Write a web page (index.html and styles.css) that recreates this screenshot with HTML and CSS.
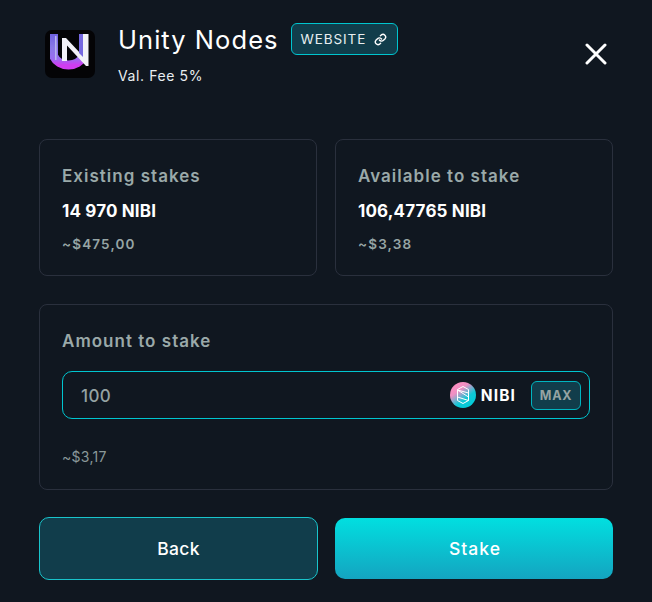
FILE: index.html
```html
<!DOCTYPE html>
<html lang="en">
<head>
<meta charset="utf-8">
<title>Unity Nodes</title>
<link rel="stylesheet" href="styles.css">
</head>
<body>
<main class="modal">
  <header class="header">
    <svg class="logo" width="50" height="48" viewBox="0 0 50 48">
      <defs>
        <linearGradient id="u" x1="0" y1="0" x2="0" y2="1">
          <stop offset="0" stop-color="#6f62e0"/><stop offset=".45" stop-color="#8a78e8"/><stop offset=".8" stop-color="#9a6cf0"/><stop offset="1" stop-color="#d03cf0"/>
        </linearGradient>
        <filter id="soft"><feGaussianBlur stdDeviation=".5"/></filter>
      </defs>
      <rect width="50" height="48" rx="7" fill="#040406"/>
      <g filter="url(#soft)">
        <path d="M8.500 4v22a16.500 15.500 0 0 0 30 0V4" fill="none" stroke="url(#u)" stroke-width="9"/>
        <path d="M10 6h1.500v24H10z" fill="#b8b4ee"/>
        <path d="M17 31V8h4l15 16V4h7.500v32H41L22 15.500V31z" fill="#f2f2f8"/>
        <path d="M34 4h4v23l-4-4z" fill="#7567e0"/>
      </g>
    </svg>
    <div class="title-block">
      <div class="title-row">
        <h1 class="title">Unity Nodes</h1>
        <a class="website">WEBSITE
          <svg class="link-icon" width="13" height="13" viewBox="0 0 24 24" fill="none" stroke="#fff" stroke-width="2.600" stroke-linecap="round" stroke-linejoin="round">
            <path d="M10 13a5 5 0 0 0 7.500.5l3-3a5 5 0 0 0-7-7l-1.700 1.700"/>
            <path d="M14 11a5 5 0 0 0-7.500-.5l-3 3a5 5 0 0 0 7 7l1.700-1.700"/>
          </svg>
        </a>
      </div>
      <p class="fee">Val. Fee 5%</p>
    </div>
    <svg class="close" width="22" height="22" viewBox="0 0 22 22" stroke="#fff" stroke-width="3" stroke-linecap="round">
      <path d="M2 2l18 18M20 2L2 20"/>
    </svg>
  </header>

  <section class="stats">
    <div class="card stat">
      <div class="label">Existing stakes</div>
      <div class="value">14 970 NIBI</div>
      <div class="usd">~$475,00</div>
    </div>
    <div class="card stat">
      <div class="label">Available to stake</div>
      <div class="value">106,47765 NIBI</div>
      <div class="usd">~$3,38</div>
    </div>
  </section>

  <section class="card amount">
    <div class="label">Amount to stake</div>
    <div class="input">
      <span class="input-value">100</span>
      <svg class="token" width="26" height="26" viewBox="0 0 26 26">
        <defs>
          <linearGradient id="t" x1="0.150" y1="0.100" x2="0.750" y2="0.900">
            <stop offset="0" stop-color="#ff8ec0"/><stop offset=".3" stop-color="#ee90c4"/><stop offset=".7" stop-color="#10c8d6"/><stop offset="1" stop-color="#04cbd8"/>
          </linearGradient>
        </defs>
        <circle cx="13" cy="13" r="13" fill="url(#t)"/>
        <path d="M13 4.500l5.500 3v11l-5.500 3-5.500-3v-11zM7.500 8l11 7M18.500 11l-11-3M7.500 15l11 3.500" fill="none" stroke="#fff" stroke-width="1"/>
      </svg>
      <span class="token-name">NIBI</span>
      <span class="max">MAX</span>
    </div>
    <div class="amount-usd">~$3,17</div>
  </section>

  <section class="actions">
    <button class="btn back">Back</button>
    <button class="btn stake">Stake</button>
  </section>
</main>
</body>
</html>
```
FILE: styles.css
```css
* { box-sizing: border-box; }
html, body { margin: 0; height: 100%; }
body {
  background: #101720;
  color: #fff;
  font-family: "Inter", "Liberation Sans", sans-serif;
  overflow: hidden;
}
.modal { width: 652px; height: 602px; padding: 23px 39px 0; }
.header { display: flex; align-items: flex-start; height: 116px; padding-left: 6px; }
.logo { margin-top: 7px; flex: none; }
.title-block { margin-left: 23px; flex: 1; }
.title-row { display: flex; align-items: center; gap: 12px; height: 32px; }
.title { margin: 2px 0 0; font-size: 25.500px; font-weight: 400; line-height: 32px; letter-spacing: 1.05px; }
.website {
  display: flex; align-items: center; gap: 8px;
  height: 32px; padding: 0 10px 0 9px;
  font-size: 13.500px; letter-spacing: .9px; color: #e8eef0;
  background: #113d4b; border: 1px solid #00c5cf; border-radius: 6px;
}
.fee { margin: 12px 0 0; font-size: 14px; line-height: 18px; color: #e9eef0; letter-spacing: .6px; }
.close { margin: 20px 6px 0 0; flex: none; }
.stats { display: grid; grid-template-columns: 278px 278px; gap: 18px; }
.card { border: 1px solid #2a303d; border-radius: 8px; }
.stat { height: 137px; padding: 25px 22px 0; }
.label { font-size: 17px; line-height: 22px; font-weight: 600; color: #9aa9a9; letter-spacing: 1.02px; }
.value { margin-top: 13px; font-size: 17px; line-height: 22px; font-weight: 700; letter-spacing: .15px; color: #fff; }
.usd { margin-top: 12px; font-size: 13.500px; line-height: 20px; font-weight: 600; color: #97a5a5; letter-spacing: 1.15px; }
.amount { height: 186px; margin-top: 28px; padding: 25px 22px 0; }
.input {
  display: flex; align-items: center;
  height: 48px; margin-top: 19px; padding: 0 8px 0 18px;
  border: 1px solid #00c5cf; border-radius: 10px;
}
.input-value { flex: 1; font-size: 17px; font-weight: 500; letter-spacing: .4px; color: #95a3a3; padding-top: 1px; }
.token { flex: none; }
.token-name { margin-left: 5px; font-size: 15.500px; font-weight: 700; letter-spacing: 1.1px; padding-top: 1px; }
.max {
  display: flex; align-items: center; justify-content: center;
  width: 50px; height: 29px; margin-left: 15px;
  font-size: 12.500px; font-weight: 700; letter-spacing: .7px; color: #95a3a3;
  background: #113d4b; border: 1px solid #00b5c0; border-radius: 6px;
}
.amount-usd { margin-top: 28px; font-size: 14px; line-height: 20px; color: #8a9899; letter-spacing: .3px; }
.actions { display: grid; grid-template-columns: 279px 278px; gap: 17px; margin-top: 27px; }
.btn {
  height: 63px; padding: 0; border-radius: 10px; color: #fff;
  font: 500 17.500px "Inter", "Liberation Sans", sans-serif;
}
.back { background: #113d4b; border: 1px solid #19c4cb; letter-spacing: .3px; }
.stake { height: 61px; margin-top: 1px; border: 0; background: linear-gradient(180deg, #01dfe0, #14a4c0); letter-spacing: 1px; padding-left: 2px; }
```
